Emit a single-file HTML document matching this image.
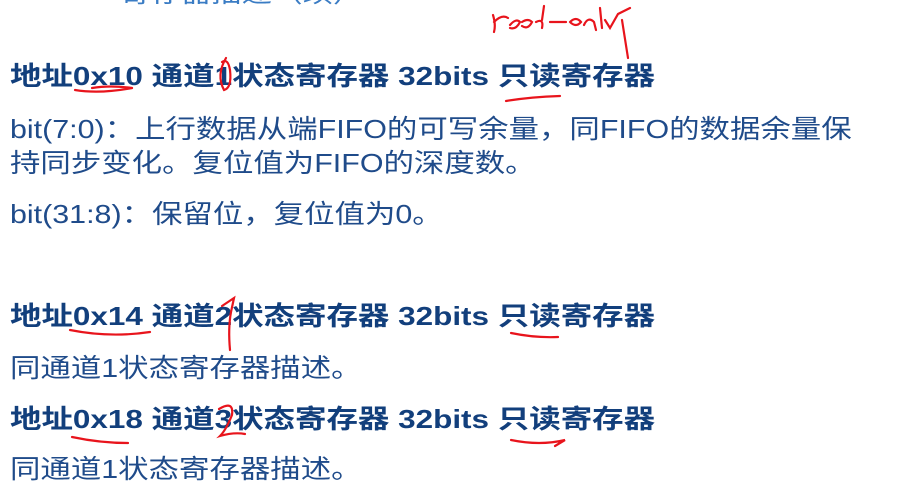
<!DOCTYPE html>
<html><head><meta charset="utf-8"><style>
html,body{margin:0;padding:0;background:#fff;width:899px;height:503px;overflow:hidden;position:relative}
.t{position:absolute;left:10px;white-space:nowrap;font-family:"Liberation Sans","Noto Sans CJK SC",sans-serif;font-size:26px;color:#1f4b8a;line-height:30px;transform-origin:0 50%;transform:scaleX(1.17)}
.h{font-weight:bold;color:#123f7c;transform:scaleX(1.21)}
svg{position:absolute;left:0;top:0}
</style></head><body>
<div class="t" style="top:-22px;left:120px;color:#3a7cc4;">寄存器描述（续）</div>
<div class="t h" style="top:61px">地址0x10 通道1状态寄存器 32bits 只读寄存器</div>
<div class="t" style="top:114px">bit(7:0)：上行数据从端FIFO的可写余量，同FIFO的数据余量保</div>
<div class="t" style="top:148px">持同步变化。复位值为FIFO的深度数。</div>
<div class="t" style="top:199px">bit(31:8)：保留位，复位值为0。</div>
<div class="t h" style="top:301px">地址0x14 通道2状态寄存器 32bits 只读寄存器</div>
<div class="t" style="top:353px">同通道1状态寄存器描述。</div>
<div class="t h" style="top:404px">地址0x18 通道3状态寄存器 32bits 只读寄存器</div>
<div class="t" style="top:454px">同通道1状态寄存器描述。</div>
<svg width="899" height="503" fill="none" stroke="#e8141c" stroke-width="2.2" stroke-linecap="round">
<path d="M75 90 Q100 94 132 88"/>
<path d="M92 88 Q110 85 132 88"/>
<path d="M506 101 Q530 97 560 96"/>
<path d="M226 58 Q216 75 224 90 Q232 88 230 70 Q228 58 222 62"/>
<path d="M493 15 Q496 25 494 32 M494 22 Q502 14 508 18 M510 25 Q516 18 520 22 Q516 30 510 28 M522 22 Q528 18 532 22 Q528 30 522 26 M536 22 Q544 18 542 28 M542 20 L544 6 M550 22 L566 22 M570 22 Q576 16 581 22 Q576 28 570 22 M584 25 Q588 16 594 22 L596 30 M600 8 L602 28 M605 20 L610 28 L618 14 L630 8 M622 20 L628 58"/>
<path d="M70 330 Q110 338 150 332"/>
<path d="M511 333 Q535 338 558 337"/>
<path d="M222 306 L234 298 L231 312 Q228 328 230 350"/>
<path d="M72 437 Q100 443 128 443"/>
<path d="M511 440 Q540 446 565 440 L555 446"/>
<path d="M219 409 Q234 400 232 415 Q226 430 220 436 Q234 432 245 434"/>
</svg>
</body></html>
